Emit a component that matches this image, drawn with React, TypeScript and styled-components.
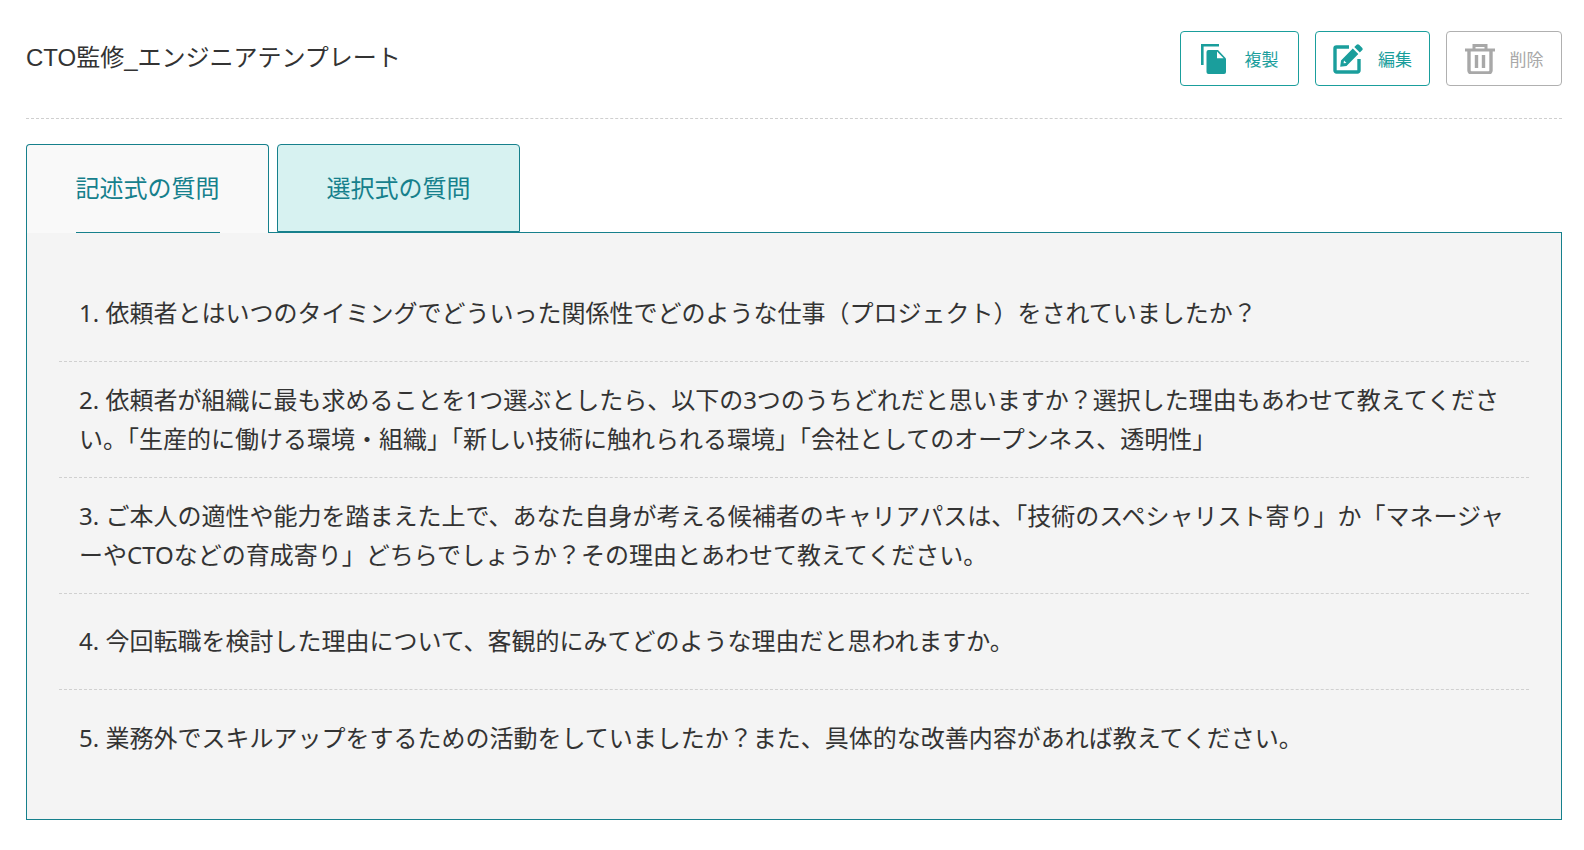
import React from "react";
import styled, { createGlobalStyle } from "styled-components";

const GlobalStyle = createGlobalStyle`
html, body {
  margin: 0;
  padding: 0;
  background: #fff;
}
`;

const FONT = `"Noto Sans", "Noto Sans CJK JP", sans-serif`;

const Page = styled.div`
  width: 1584px;
  height: 850px;
  box-sizing: border-box;
  padding: 31px 22px 0 26px;
  font-family: ${FONT};
  overflow: hidden;
`;

const Header = styled.header`
  display: flex;
  justify-content: space-between;
  align-items: flex-start;
  height: 87px;
  border-bottom: 1px dashed #cfcfcf;
`;

const Title = styled.h1`
  margin: 0;
  font-family: "Liberation Sans", "Noto Sans CJK JP", sans-serif;
  font-size: 24px;
  font-weight: 400;
  line-height: 54px;
  color: #333;
`;

const Actions = styled.div`
  display: flex;
  gap: 16px;
`;

const ActionButton = styled.button<{ $disabled?: boolean; $width: number; $gap: number }>`
  display: flex;
  align-items: center;
  justify-content: center;
  gap: ${(p) => p.$gap}px;
  width: ${(p) => p.$width}px;
  height: 55px;
  padding: 0;
  box-sizing: border-box;
  background: #fff;
  border: 1px solid ${(p) => (p.$disabled ? "#b0b0b0" : "#1a9e9c")};
  border-radius: 4px;
  color: ${(p) => (p.$disabled ? "#a8a8a8" : "#1a9e9c")};
  font-family: ${FONT};
  font-size: 17px;
`;

const Tabs = styled.div`
  display: flex;
  gap: 8px;
  margin-top: 25px;
  margin-bottom: -1px;
  position: relative;
  z-index: 1;
`;

const Tab = styled.div<{ $active?: boolean }>`
  display: flex;
  justify-content: center;
  width: 243px;
  height: ${(p) => (p.$active ? 89 : 88)}px;
  box-sizing: border-box;
  background: ${(p) => (p.$active ? "#f9f9f9" : "#d7f2f1")};
  border: 1px solid #16808c;
  border-bottom: ${(p) => (p.$active ? "none" : "1px solid #16808c")};
  border-radius: 4px 4px 0 0;
`;

const TabLabel = styled.span<{ $active?: boolean }>`
  height: ${(p) => (p.$active ? 88 : 86)}px;
  box-sizing: border-box;
  padding-top: 26px;
  line-height: 34px;
  font-size: 24px;
  color: #16808c;
  border-bottom: ${(p) => (p.$active ? "1px solid #16808c" : "none")};
`;

const Panel = styled.section`
  box-sizing: border-box;
  height: 588px;
  padding: 33px 32px;
  background: #f4f4f4;
  border: 1px solid #16808c;
`;

const Question = styled.div`
  display: flex;
  align-items: center;
  min-height: 96px;
  box-sizing: border-box;
  padding: 19px 20px;
  border-bottom: 1px dashed #d0d0d0;
  font-size: 24px;
  line-height: 38.5px;
  color: #333;

  &:last-child {
    border-bottom: none;
  }
`;

const CopyIcon = () => (
  <svg width="26" height="30" viewBox="0 0 26 30">
    <path d="M0 21V0h18v2.4H2.6V21z" fill="currentColor" />
    <path d="M7.5 6h9.5l8 8.5v13.5a2 2 0 0 1-2 2H7.500a2 2 0 0 1-2-2V8a2 2 0 0 1 2-2z" fill="currentColor" />
    <path d="M16 7.5v6.800h6.600z" fill="#fff" />
  </svg>
);

const EditIcon = () => (
  <svg width="30" height="30" viewBox="0 0 30 30" fill="none">
    <path d="M16 3H3.500A1.500 1.500 0 0 0 2 4.500v22A1.500 1.500 0 0 0 3.500 28h21a1.500 1.500 0 0 0 1.500-1.500V15" stroke="currentColor" strokeWidth="3.400" />
    <path d="M23.600.8a1.800 1.800 0 0 1 2.500 0l3 3a1.800 1.800 0 0 1 0 2.500l-2.300 2.300-5.500-5.500zM19.800 4.600l5.500 5.500-11.800 11.800-6.300.9.800-6.400zM11 16.500l-.4 2.800 2.900-.4z" fill="currentColor" fillRule="evenodd" />
  </svg>
);

const TrashIcon = () => (
  <svg width="30" height="31" viewBox="0 0 30 31" fill="none" stroke="currentColor">
    <path d="M0 7h30" strokeWidth="3" />
    <path d="M9 7V2.500h12V7" strokeWidth="3" />
    <path d="M4 7v20.500A2.500 2.500 0 0 0 6.500 30h17a2.500 2.500 0 0 0 2.500-2.500V7" strokeWidth="3.400" />
    <path d="M11.500 12v13M18.500 12v13" strokeWidth="3.400" />
  </svg>
);

const questions = [
  "1. 依頼者とはいつのタイミングでどういった関係性でどのような仕事（プロジェクト）をされていましたか？",
  "2. 依頼者が組織に最も求めることを1つ選ぶとしたら、以下の3つのうちどれだと思いますか？選択した理由もあわせて教えてください。「生産的に働ける環境・組織」「新しい技術に触れられる環境」「会社としてのオープンネス、透明性」",
  "3. ご本人の適性や能力を踏まえた上で、あなた自身が考える候補者のキャリアパスは、「技術のスペシャリスト寄り」か「マネージャーやCTOなどの育成寄り」どちらでしょうか？その理由とあわせて教えてください。",
  "4. 今回転職を検討した理由について、客観的にみてどのような理由だと思われますか。",
  "5. 業務外でスキルアップをするための活動をしていましたか？また、具体的な改善内容があれば教えてください。",
];

const App: React.FC = () => {
  return (
    <Page>
      <GlobalStyle />
      <Header>
        <Title>CTO監修_エンジニアテンプレート</Title>
        <Actions>
          <ActionButton $width={119} $gap={18}>
            <CopyIcon />
            複製
          </ActionButton>
          <ActionButton $width={115} $gap={15}>
            <EditIcon />
            編集
          </ActionButton>
          <ActionButton $width={116} $gap={15} $disabled>
            <TrashIcon />
            削除
          </ActionButton>
        </Actions>
      </Header>
      <Tabs>
        <Tab $active>
          <TabLabel $active>記述式の質問</TabLabel>
        </Tab>
        <Tab>
          <TabLabel>選択式の質問</TabLabel>
        </Tab>
      </Tabs>
      <Panel>
        {questions.map((q) => (
          <Question key={q}>{q}</Question>
        ))}
      </Panel>
    </Page>
  );
};

export default App;
